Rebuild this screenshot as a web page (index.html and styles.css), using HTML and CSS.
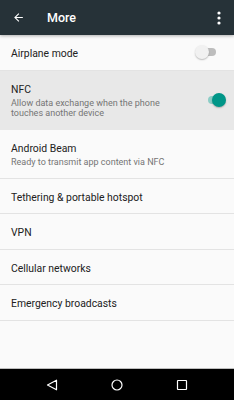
FILE: index.html
```html
<!DOCTYPE html>
<html>
<head>
<meta charset="utf-8">
<link rel="stylesheet" href="styles.css">
</head>
<body>
<div class="screen">
  <header class="toolbar">
    <svg class="back" width="13" height="13" viewBox="0 0 24 24"><path d="M20 11H7.83l5.59-5.59L12 4l-8 8 8 8 1.41-1.41L7.83 13H20v-2z" fill="#fff"/></svg>
    <div class="title">More</div>
    <svg class="overflow" width="4" height="14" viewBox="0 0 4 14"><circle cx="2" cy="2" r="1.6" fill="#fff"/><circle cx="2" cy="7" r="1.6" fill="#fff"/><circle cx="2" cy="12" r="1.6" fill="#fff"/></svg>
  </header>
  <main class="list">
    <div class="row single">
      <div class="text"><div class="t">Airplane mode</div></div>
      <div class="switch off"><span class="track"></span><span class="thumb"></span></div>
    </div>
    <div class="row multi active">
      <div class="text"><div class="t">NFC</div><div class="s">Allow data exchange when the phone touches another device</div></div>
      <div class="switch on"><span class="track"></span><span class="thumb"></span></div>
    </div>
    <div class="row multi">
      <div class="text"><div class="t">Android Beam</div><div class="s">Ready to transmit app content via NFC</div></div>
    </div>
    <div class="row single"><div class="text"><div class="t">Tethering &amp; portable hotspot</div></div></div>
    <div class="row single"><div class="text"><div class="t">VPN</div></div></div>
    <div class="row single"><div class="text"><div class="t">Cellular networks</div></div></div>
    <div class="row single"><div class="text"><div class="t">Emergency broadcasts</div></div></div>
  </main>
  <footer class="navbar">
    <svg width="12" height="12" viewBox="0 0 12 12"><path d="M10.5 1.2 L1.5 6 L10.5 10.8 Z" fill="none" stroke="#fff" stroke-width="1.2" stroke-linejoin="round"/></svg>
    <svg width="12" height="12" viewBox="0 0 12 12"><circle cx="6" cy="6" r="5" fill="none" stroke="#fff" stroke-width="1.2"/></svg>
    <svg width="12" height="12" viewBox="0 0 12 12"><rect x="1.5" y="1.5" width="9" height="9" rx="0.5" fill="none" stroke="#fff" stroke-width="1.2"/></svg>
  </footer>
</div>
</body>
</html>
```

FILE: styles.css
```css
* { box-sizing: border-box; }
html, body { margin: 0; padding: 0; }
body {
  width: 234px;
  height: 400px;
  font-family: Roboto, "Noto Sans", sans-serif;
  background: #fafafa;
  overflow: hidden;
}
.screen {
  display: flex;
  flex-direction: column;
  height: 400px;
}
.toolbar {
  height: 35px;
  flex: none;
  background: #263238;
  display: flex;
  align-items: center;
  padding: 0 13px 0 12px;
  box-shadow: 0 1px 3px rgba(0,0,0,0.3);
  position: relative;
  z-index: 1;
}
.back { flex: none; }
.title {
  color: #fff;
  font-size: 12.5px;
  font-weight: 500;
  margin-left: 22px;
  flex: 1;
}
.overflow { flex: none; }
.list {
  flex: 1;
  background: #fafafa;
}
.row {
  display: flex;
  align-items: center;
  padding-left: 11px;
  padding-right: 12px;
  border-bottom: 1px solid #e3e3e3;
}
.row.single { height: 35.5px; padding-top: 4px; }
.row.multi { padding-top: 12px; padding-bottom: 11px; }
.row.active { background: #e8e8e8; border-bottom-color: #e8e8e8; }
.text { flex: 1; }
.t {
  font-size: 10.4px;
  line-height: 14px;
  color: #212121;
}
.s {
  font-size: 9px;
  line-height: 10px;
  color: #757575;
  margin-top: 1px;
  max-width: 160px;
}
.switch {
  position: relative;
  width: 22px;
  height: 14px;
  flex: none;
}
.switch .track {
  position: absolute;
  left: 5px;
  top: 3px;
  width: 16px;
  height: 8px;
  border-radius: 4px;
}
.switch .thumb {
  position: absolute;
  top: 0;
  width: 14px;
  height: 14px;
  border-radius: 50%;
  box-shadow: 0 1px 1.5px rgba(0,0,0,0.25);
}
.switch.off .track { background: #bdbdbd; }
.switch.off .thumb { left: 0; background: #f1f1f1; }
.switch.on .track { background: #8ccdc6; }
.switch.on .thumb { left: 9px; background: #009688; }
.switch.off { margin-right: 5px; margin-top: -4px; }
.switch.on { margin-right: -3px; }
.navbar {
  height: 32px;
  flex: none;
  background: #000;
  border-top: 1px solid #bdbdbd;
  display: flex;
  align-items: center;
  justify-content: space-between;
  padding: 0 46px 0 46px;
}
```
